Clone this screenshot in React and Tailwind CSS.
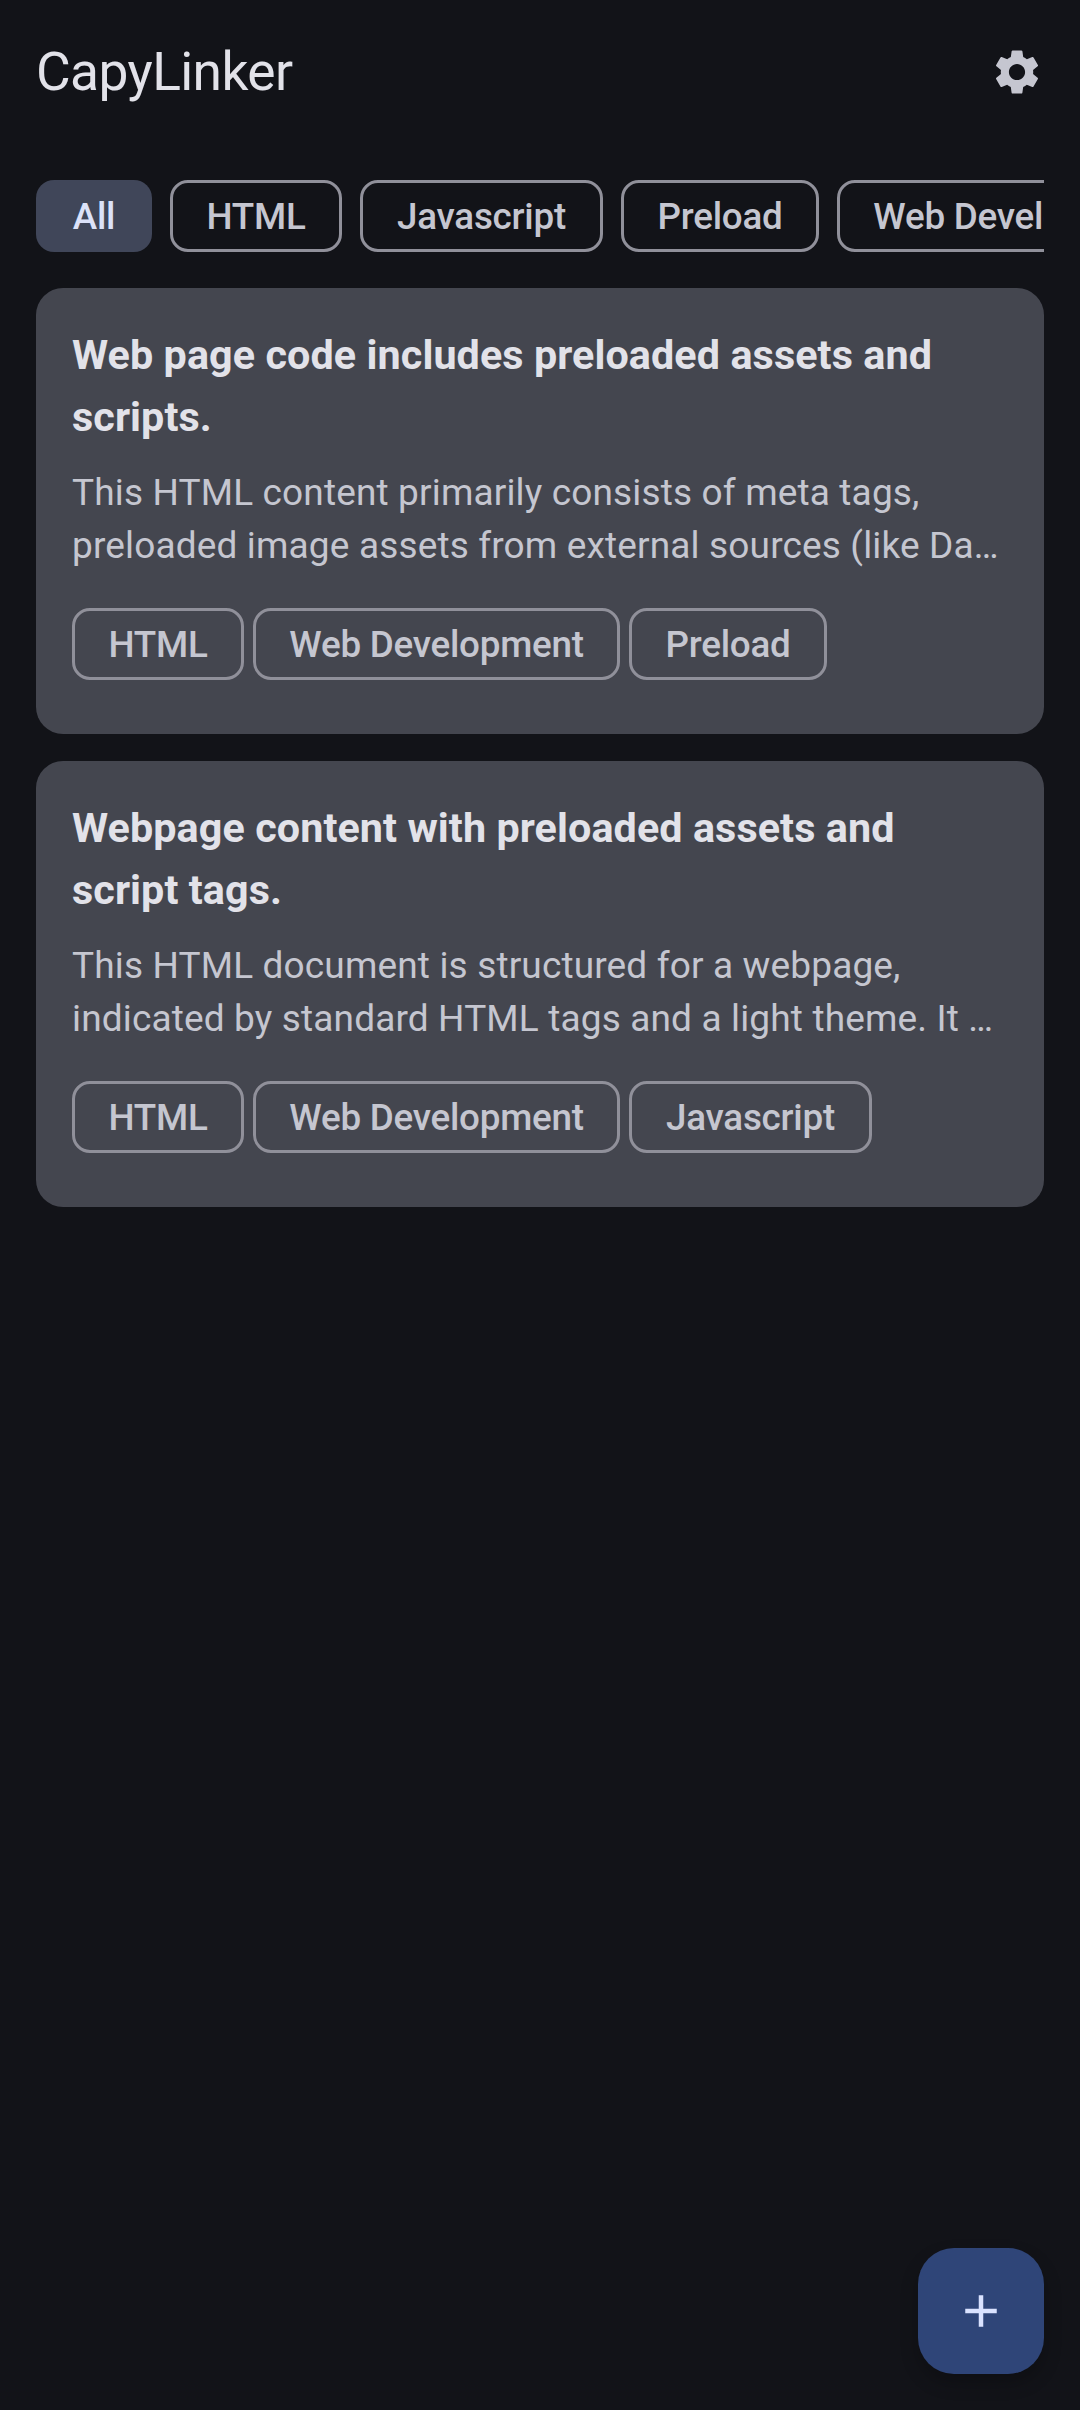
import React from "react";
import { MdAdd, MdSettings } from "react-icons/md";

const chipWidths = {
  All: "w-[116px]",
  HTML: "w-[172px]",
  Javascript: "w-[243px]",
  Preload: "w-[198px]",
  "Web Development": "w-[367px]",
};

const filters = ["All", "HTML", "Javascript", "Preload", "Web Development"];

const links = [
  {
    title: ["Web page code includes preloaded assets and", "scripts."],
    summary: [
      "This HTML content primarily consists of meta tags,",
      "preloaded image assets from external sources (like Da…",
    ],
    tags: ["HTML", "Web Development", "Preload"],
  },
  {
    title: ["Webpage content with preloaded assets and", "script tags."],
    summary: [
      "This HTML document is structured for a webpage,",
      "indicated by standard HTML tags and a light theme. It …",
    ],
    tags: ["HTML", "Web Development", "Javascript"],
  },
];

function Chip({ label, selected = false }) {
  const tone = selected
    ? "bg-[#404659] text-[#dce2f9]"
    : "border-[3px] border-[#90909a] text-[#c5c6d0]";
  return (
    <button
      className={`flex h-[72px] shrink-0 items-center justify-center rounded-[18px] pt-[2px] text-[36.8px] leading-[54px] font-medium tracking-[-0.25px] whitespace-nowrap ${chipWidths[label]} ${tone}`}
    >
      {label}
    </button>
  );
}

function LinkCard({ title, summary, tags }) {
  return (
    <article className="h-[446px] rounded-[27px] bg-[#44464f] p-9 whitespace-nowrap">
      <h2 className="text-[41.3px] leading-[62.25px] font-bold tracking-[0.08px] text-[#e2e2e9]">
        {title.map((line) => (
          <span key={line} className="block">{line}</span>
        ))}
      </h2>
      <p className="mt-[17px] text-[37px] leading-[53px] tracking-[0.15px] text-[#c5c6d0]">
        {summary.map((line) => (
          <span key={line} className="block">{line}</span>
        ))}
      </p>
      <div className="mt-[36.5px] flex gap-[9px]">
        {tags.map((tag) => (
          <Chip key={tag} label={tag} />
        ))}
      </div>
    </article>
  );
}

export default function App() {
  return (
    <div className="flex h-[2410px] w-[1080px] flex-col overflow-hidden bg-[#121318] px-9 font-[Roboto,sans-serif]">
      <header className="flex h-36 items-center justify-between">
        <h1 className="text-[53.3px] leading-[72px] tracking-[-0.6px] text-[#e2e2e9]">
          CapyLinker
        </h1>
        <button aria-label="Settings" className="text-[#c5c6d0]">
          <MdSettings className="size-[54px]" />
        </button>
      </header>

      <nav className="mt-9 flex gap-[18px] overflow-hidden">
        {filters.map((name, i) => (
          <Chip key={name} label={name} selected={i === 0} />
        ))}
      </nav>

      <main className="mt-9 flex flex-col gap-[27px]">
        {links.map((link) => (
          <LinkCard key={link.title[0]} {...link} />
        ))}
      </main>

      <button
        aria-label="Add link"
        className="mt-auto mb-9 flex size-[126px] items-center justify-center self-end rounded-[36px] bg-[#2f4578] text-[#dae2ff] shadow-[0_9px_18px_rgba(0,0,0,0.22)]"
      >
        <MdAdd className="size-[54px]" />
      </button>
    </div>
  );
}
